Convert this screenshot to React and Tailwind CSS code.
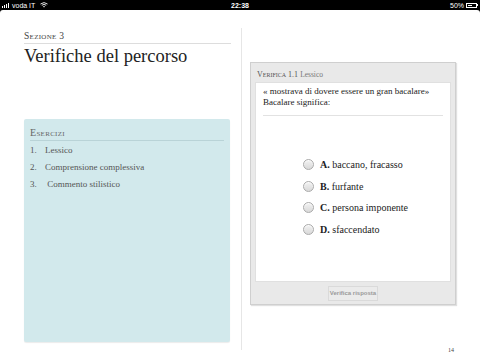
import React from 'react';

const serif = { fontFamily: '"Liberation Serif", "DejaVu Serif", serif' };

function StatusBar() {
  return (
    <div className="h-[10px] bg-black text-white flex items-center justify-between px-[2px] text-[7px] leading-none font-['Liberation_Sans',sans-serif]">
      <div className="flex items-center gap-[3px] w-[80px]">
        {/* signal bars */}
        <div className="flex items-end gap-[1px] h-[5px]">
          <span className="w-px h-[2px] bg-white" />
          <span className="w-px h-[3px] bg-white" />
          <span className="w-px h-[4px] bg-white" />
          <span className="w-px h-[5px] bg-white" />
        </div>
        <span>voda IT</span>
        <svg width="8" height="6" viewBox="0 0 8 6" className="ml-[2px]">
          <path d="M0.5 2 Q4 -0.8 7.5 2" stroke="white" strokeWidth="0.9" fill="none" />
          <path d="M1.8 3.3 Q4 1.5 6.2 3.3" stroke="white" strokeWidth="0.9" fill="none" />
          <path d="M4 5.6 L3 4.4 Q4 3.7 5 4.4 Z" fill="white" />
        </svg>
      </div>
      <span className="font-bold">22:38</span>
      <div className="flex items-center justify-end gap-[2px] w-[80px]">
        <span>50%</span>
        <div className="flex items-center">
          <div className="w-[11px] h-[5px] border border-white p-px">
            <div className="w-1/2 h-full bg-white" />
          </div>
          <span className="w-px h-[2px] bg-white" />
        </div>
      </div>
    </div>
  );
}

function Radio({ letter, text }) {
  return (
    <div className="flex items-center h-[21.5px]">
      <span className="w-[11px] h-[11px] rounded-full border border-[#aaa] bg-gradient-to-b from-[#f2f2f2] to-[#d9d9d9] shadow-[inset_0_1px_1px_rgba(255,255,255,0.9)]" />
      <span className="ml-[6px] text-[10px] text-[#222]" style={serif}>
        <b>{letter}.</b> {text}
      </span>
    </div>
  );
}

export default function App() {
  const items = ['Lessico', 'Comprensione complessiva', ' Commento stilistico'];
  return (
    <div className="w-[480px] h-[360px] bg-black overflow-hidden">
      <StatusBar />
      <div className="relative h-[350px] bg-white rounded-t-[3px] flex pl-[24px]">
        {/* Left column */}
        <div className="w-[206px] flex flex-col">
          <div className="mt-[20px] text-[9.5px] leading-[12px] text-[#444] [font-variant:small-caps] tracking-[0.3px]" style={serif}>
            Sezione 3
          </div>
          <div className="h-px bg-[#ddd] mt-[1px] mr-[-1px]" />
          <h1 className="text-[18.5px] leading-[22px] text-[#222] mt-[1px]" style={serif}>
            Verifiche del percorso
          </h1>
          <div className="mt-[52px] h-[223px] rounded-[2px] bg-[#d2e9ec] shadow-[0_1px_1px_rgba(0,0,0,0.08)] px-[6px] pt-[8px]">
            <div className="text-[10px] leading-[12px] text-[#666] [font-variant:small-caps] tracking-[0.3px]" style={serif}>
              Esercizi
            </div>
            <div className="h-px bg-[#b9d3d7] mt-[1px]" />
            <ol className="mt-[1px] text-[9px] text-[#555]" style={serif}>
              {items.map((t, i) => (
                <li key={i} className="flex h-[17px] items-center">
                  <span className="w-[15px]">{i + 1}.</span>
                  <span className="whitespace-pre">{t}</span>
                </li>
              ))}
            </ol>
          </div>
        </div>

        {/* Divider */}
        <div className="ml-[11px] mt-[18px] w-px h-[322px] bg-[#e6e6e6]" />

        {/* Right column */}
        <div className="ml-[8px] w-[206px] flex flex-col">
          <div className="mt-[52px] h-[243px] bg-[#e9e9e9] border border-[#cfcfcf] shadow-[1px_1px_1px_rgba(0,0,0,0.12)] flex flex-col px-[4px]">
            <div className="h-[19px] flex items-baseline pt-[6px] pl-[2px] gap-[2px]" style={serif}>
              <span className="text-[8px] text-[#555] [font-variant:small-caps]">Verifica 1.1</span>
              <span className="text-[7.5px] text-[#777]">Lessico</span>
            </div>
            <div className="h-[200px] bg-white border border-[#e0e0e0] px-[7px] pt-[3px] flex flex-col">
              <p className="text-[9px] leading-[11px] text-[#222]" style={serif}>
                « mostrava di dovere essere un gran bacalare»
                <br />
                Bacalare significa:
              </p>
              <div className="h-px bg-[#e2e2e2] mt-[7px]" />
              <div className="mt-[38px] pl-[40px] flex flex-col">
                <Radio letter="A" text="baccano, fracasso" />
                <Radio letter="B" text="furfante" />
                <Radio letter="C" text="persona imponente" />
                <Radio letter="D" text="sfaccendato" />
              </div>
            </div>
            <div className="flex justify-center mt-[4px]">
              <div className="w-[50px] h-[15px] border border-[#dadada] bg-[#ebebeb] flex items-center justify-center text-[6px] font-bold text-[#9a9a9a] font-['Liberation_Sans',sans-serif]">
                Verifica risposta
              </div>
            </div>
          </div>
          <div className="flex justify-end mt-[41px] pr-[2px] text-[6px] text-[#444]" style={serif}>
            14
          </div>
        </div>
      </div>
    </div>
  );
}
